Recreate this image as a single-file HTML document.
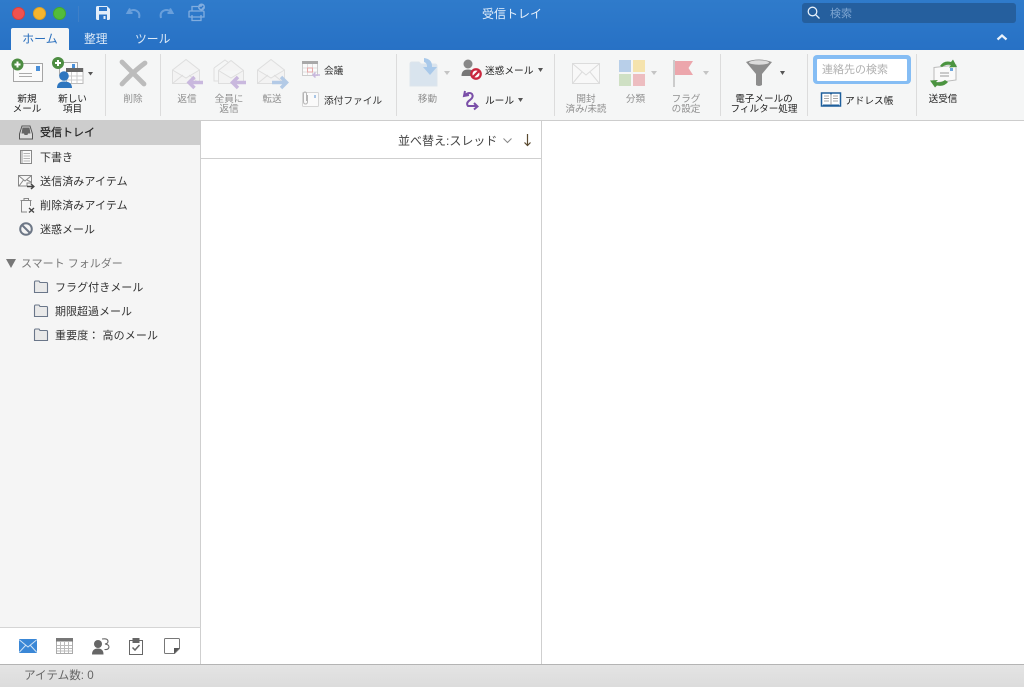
<!DOCTYPE html>
<html lang="ja"><head><meta charset="utf-8"><title>受信トレイ</title>
<style>
*{box-sizing:border-box}
html,body{margin:0;padding:0}
body{width:1024px;height:687px;position:relative;overflow:hidden;background:#fff;font-family:"Liberation Sans","Noto Sans CJK JP",sans-serif;color:#333}
.a{position:absolute}
.t{position:absolute;white-space:nowrap;font-size:9.6px;line-height:10px;text-align:center;color:#222;margin-top:1px}
.g{color:#8f8f8f}
.sep{position:absolute;top:54px;width:1px;height:62px;background:#dcdcdc}
.s{position:absolute;white-space:nowrap;font-size:11px;line-height:14px;color:#333}
.r{font-size:9.7px}
svg{position:absolute;overflow:visible}
</style></head><body>
<div class="a" style="left:0;top:0;width:1024px;height:50px;background:linear-gradient(#2f7bcb,#2771c5)"></div>
<div class="a" style="left:12px;top:7px;width:13px;height:13px;border-radius:50%;background:#f0524f;border:1px solid #d9403d"></div>
<div class="a" style="left:33px;top:7px;width:13px;height:13px;border-radius:50%;background:#f6b52e;border:1px solid #dea224"></div>
<div class="a" style="left:53px;top:7px;width:13px;height:13px;border-radius:50%;background:#53bc3a;border:1px solid #45a82f"></div>
<div class="a" style="left:78px;top:6px;width:1px;height:16px;background:#3f80c8"></div>
<svg style="left:95px;top:5px" width="16" height="16" viewBox="0 0 16 16"><path d="M1 2.500Q1 1 2.500 1H12L15 4V13.500Q15 15 13.500 15H2.500Q1 15 1 13.500Z" fill="#e3eefa"/><rect x="4" y="2" width="8" height="4" fill="#2d76c8"/><rect x="4" y="9.500" width="8" height="5.500" fill="#2d76c8"/><rect x="8.500" y="11" width="2" height="3" fill="#e3eefa"/></svg>
<svg style="left:126px;top:7px" width="16" height="13" viewBox="0 0 16 13" fill="none" stroke="#699fdb" stroke-width="2"><path d="M4 1.500L1.500 6H6.500M2.500 5.500Q6 2 10 3.500Q14.500 5.500 13 11"/></svg>
<svg style="left:158px;top:7px" width="16" height="13" viewBox="0 0 16 13" fill="none" stroke="#699fdb" stroke-width="2"><path d="M12 1.500L14.500 6H9.500M13.500 5.500Q10 2 6 3.500Q1.500 5.500 3 11"/></svg>
<svg style="left:188px;top:3px" width="18" height="19" viewBox="0 0 18 19" fill="none" stroke="#81addf" stroke-width="1.300"><path d="M4 8V3.500H10M1 9Q1 8 2 8H15Q16 8 16 9V14H1ZM4 12V17.500H13V12"/><circle cx="13.500" cy="4" r="3.500" fill="#81addf" stroke="none"/><path d="M11.800 4L13 5.200L15.200 2.800" stroke="#2d76c8"/></svg>
<div class="a" style="left:0;top:0;width:1024px;text-align:center;font-size:12px;line-height:29px;color:#e6f0fb">受信トレイ</div>
<div class="a" style="left:802px;top:3px;width:214px;height:20px;border-radius:3px;background:#255f9e"></div>
<svg style="left:807px;top:6px" width="14" height="14" viewBox="0 0 14 14" fill="none" stroke="#e6f0fb" stroke-width="1.300"><circle cx="5.500" cy="5.500" r="4.300"/><path d="M8.700 8.700L12.500 12.500"/></svg>
<div class="a" style="left:830px;top:7px;font-size:11px;line-height:15px;color:#7ea6d2">検索</div>
<div class="a" style="left:11px;top:28px;width:58px;height:22px;background:#f5f6f6;border-radius:2px 2px 0 0;text-align:center;font-size:12px;line-height:23px;color:#2a6fbd">ホーム</div>
<div class="a" style="left:84px;top:28px;font-size:11.8px;line-height:23px;color:#dce9f7">整理</div>
<div class="a" style="left:135px;top:28px;font-size:11.8px;line-height:23px;color:#dce9f7">ツール</div>
<svg style="left:996px;top:33px" width="12" height="9" viewBox="0 0 12 9" fill="none" stroke="#eaf2fb" stroke-width="2.200"><path d="M1.500 6.500L6 2.500L10.500 6.500"/></svg>

<div class="a" style="left:0;top:50px;width:1024px;height:71px;background:#f5f6f6;border-bottom:1px solid #cdcdcd"></div>
<div class="sep" style="left:105px"></div><div class="sep" style="left:160px"></div><div class="sep" style="left:396px"></div><div class="sep" style="left:554px"></div><div class="sep" style="left:720px"></div><div class="sep" style="left:807px"></div><div class="sep" style="left:916px"></div>

<svg style="left:11px;top:58px" width="34" height="26" viewBox="0 0 34 26"><rect x="2.500" y="5.500" width="29" height="18" fill="#fafafa" stroke="#a5a5a5"/><rect x="25" y="8" width="4" height="5" fill="#4a90d9"/><path d="M8 15.500H21M8 18.500H21" stroke="#aaa"/><circle cx="6.500" cy="6.500" r="6" fill="#4d8d42"/><path d="M3.500 6.500H9.500M6.500 3.500V9.500" stroke="#fff" stroke-width="2"/></svg>
<div class="t" style="left:7px;top:94px;width:40px">新規<br>メール</div>
<svg style="left:53px;top:57px" width="42" height="32" viewBox="0 0 42 32"><rect x="6.500" y="5.500" width="18" height="13" fill="#fafafa" stroke="#aaa"/><rect x="19" y="7" width="3" height="4" fill="#4a90d9"/><circle cx="5" cy="6" r="6" fill="#4d8d42"/><path d="M2 6H8M5 3V9" stroke="#fff" stroke-width="2"/><rect x="13.500" y="11.500" width="16.500" height="15" fill="#fff" stroke="#bbb"/><rect x="13" y="11" width="17" height="4" fill="#666"/><path d="M18.500 15V26M24 15V26M14 19H30M14 23H30" stroke="#ccc"/><circle cx="11" cy="19" r="4.800" fill="#2e76bf"/><path d="M4 31Q4 24.500 11 24.500Q19 24.500 19 31Z" fill="#2e76bf"/><path d="M35 15H40L37.500 18.500Z" fill="#555"/></svg>
<div class="t" style="left:52.500px;top:94px;width:40px">新しい<br>項目</div>
<svg style="left:119px;top:59px" width="28" height="28" viewBox="0 0 28 28" fill="none" stroke="#bcbcbc" stroke-width="4.800" stroke-linecap="round"><path d="M3 3Q13 13 25 25M26 4Q15 12 3 25"/></svg>
<div class="t g" style="left:113px;top:94px;width:40px">削除</div>

<svg style="left:171px;top:57px" width="34" height="34" viewBox="0 0 34 34" fill="none"><path d="M1.500 13L15 2.500L28.500 13V26.500H1.500Z M1.500 13L15 21L28.500 13M1.500 26.500L12 18M28.500 26.500L18 18" stroke="#dedede" fill="#f3f3f3"/><path d="M32 25.500H18.500M23.500 20L18 25.500L23.500 31" stroke="#c9b8de" stroke-width="3.500"/></svg>
<div class="t g" style="left:167px;top:94px;width:40px">返信</div>
<svg style="left:213px;top:57px" width="36" height="34" viewBox="0 0 36 34" fill="none"><path d="M1 11L12 3L16 6M1 11V24H5" stroke="#dedede"/><path d="M5.500 13.500L18 3.500L30.500 13.500V26.500H5.500Z M5.500 13.500L18 21L30.500 13.500" stroke="#dedede" fill="#f3f3f3"/><path d="M33 25.500H20M25 20L19.500 25.500L25 31" stroke="#c9b8de" stroke-width="3.500"/></svg>
<div class="t g" style="left:209px;top:94px;width:40px">全員に<br>返信</div>
<svg style="left:256px;top:57px" width="34" height="34" viewBox="0 0 34 34" fill="none"><path d="M1.500 13L15 2.500L28.500 13V26.500H1.500Z M1.500 13L15 21L28.500 13M1.500 26.500L12 18M28.500 26.500L18 18" stroke="#dedede" fill="#f3f3f3"/><path d="M16 25.500H30M25 20L30.500 25.500L25 31" stroke="#b3cae6" stroke-width="3.500"/></svg>
<div class="t g" style="left:252px;top:94px;width:40px">転送</div>
<svg style="left:301px;top:60px" width="20" height="20" viewBox="0 0 20 20" fill="none"><rect x="1.500" y="1.500" width="15" height="14" fill="#fafafa" stroke="#ccc"/><rect x="1" y="1" width="16" height="3" fill="#a8a8a8"/><path d="M6.500 4V15M11.500 4V15M2 8H16M2 12H16" stroke="#ddd"/><rect x="6.500" y="8" width="5" height="4" stroke="#e7a7a7"/><path d="M19 15H12M14.500 12.500L12 15L14.500 17.500" stroke="#c9b8de" stroke-width="1.500"/></svg>
<div class="s g r" style="left:324px;top:65px">会議</div>
<svg style="left:301px;top:91px" width="19" height="17" viewBox="0 0 19 17" fill="none"><rect x="1.500" y="1.500" width="16" height="14" rx="1" fill="#fafafa" stroke="#d5d5d5"/><rect x="13" y="4" width="2" height="3" fill="#a9c6e6"/><path d="M6.500 4V10.500Q6.500 13 4.500 13Q2.500 13 2.500 10.500V3Q2.500 1 4 1Q5.500 1 5.500 3V10" stroke="#b5b5b5"/></svg>
<div class="s g r" style="left:324px;top:95px">添付ファイル</div>

<svg style="left:409px;top:57px" width="30" height="31" viewBox="0 0 30 31"><path d="M1 7Q1 5 3 5H10L12 7H26Q28 7 28 9V29H1Z" fill="#d9e4ee" stroke="#dde5ec"/><path d="M15 1Q23 2 23 9V10H28L21 18L14 10H18V9Q18 6 15 5Z" fill="#a9c9ea"/></svg>
<svg style="left:444px;top:71px" width="6" height="4"><path d="M0 0H6L3 4Z" fill="#c4c4c4"/></svg>
<div class="t g" style="left:407.500px;top:94px;width:40px">移動</div>
<svg style="left:461px;top:59px" width="22" height="21" viewBox="0 0 22 21"><circle cx="7" cy="5" r="4.500" fill="#888"/><path d="M0.500 17Q0.500 10.500 7 10.500Q14 10.500 14 17Z" fill="#777"/><circle cx="15" cy="15" r="4.700" fill="#fff" stroke="#c9283e" stroke-width="2.300"/><path d="M11.800 18.200L18.200 11.800" stroke="#c9283e" stroke-width="2.300"/></svg>
<div class="s r" style="left:485px;top:65px;color:#222">迷惑メール</div>
<svg style="left:538px;top:68px" width="5" height="4"><path d="M0 0H5L2.500 4Z" fill="#555"/></svg>
<svg style="left:463px;top:90px" width="17" height="21" viewBox="0 0 17 21" fill="none" stroke="#7a4fa8" stroke-width="2"><path d="M2 1L1 6L6 5M1.500 5.500Q6 1.500 9 4Q11 7 7 10Q2.500 13 5 16H13M11 13L14.500 16.500L11 19.500"/></svg>
<div class="s r" style="left:485px;top:95px;color:#222">ルール</div>
<svg style="left:518px;top:98px" width="5" height="4"><path d="M0 0H5L2.500 4Z" fill="#555"/></svg>

<svg style="left:572px;top:63px" width="28" height="21" viewBox="0 0 28 21" fill="none" stroke="#dcdcdc"><rect x="0.500" y="0.500" width="27" height="20" fill="#f8f8f8"/><path d="M1 1L14 12L27 1M1 20L10 9M27 20L18 9"/></svg>
<div class="t g" style="left:565px;top:94px;width:42px">開封<br>済み/未読</div>
<div class="a" style="left:619px;top:60px;width:12px;height:12px;background:#b8cfe9"></div>
<div class="a" style="left:633px;top:60px;width:12px;height:12px;background:#f5e3ad"></div>
<div class="a" style="left:619px;top:74px;width:12px;height:12px;background:#cfe0c4"></div>
<div class="a" style="left:633px;top:74px;width:12px;height:12px;background:#edbdc0"></div>
<svg style="left:651px;top:71px" width="6" height="4"><path d="M0 0H6L3 4Z" fill="#c4c4c4"/></svg>
<div class="t g" style="left:615.500px;top:94px;width:40px">分類</div>
<svg style="left:672px;top:60px" width="22" height="27" viewBox="0 0 22 27"><path d="M1 0H3V27H1Z" fill="#ccc"/><path d="M3 1H21L16.500 8L21 15H3Z" fill="#eca6ac"/></svg>
<svg style="left:703px;top:71px" width="6" height="4"><path d="M0 0H6L3 4Z" fill="#c4c4c4"/></svg>
<div class="t g" style="left:666px;top:94px;width:40px">フラグ<br>の設定</div>

<svg style="left:745px;top:59px" width="28" height="28" viewBox="0 0 28 28"><path d="M1 3Q14 -2 27 3L17 15V26Q14 28 11 26V15Z" fill="#8d8d8d"/><ellipse cx="14" cy="3.500" rx="10" ry="2.200" fill="#dcdcdc"/></svg>
<svg style="left:780px;top:71px" width="5" height="4"><path d="M0 0H5L2.500 4Z" fill="#555"/></svg>
<div class="t" style="left:729px;top:94px;width:70px">電子メールの<br>フィルター処理</div>

<div class="a" style="left:813px;top:55px;width:98px;height:29px;background:#85bdf4;border-radius:4px"></div>
<div class="a" style="left:817px;top:59px;width:90px;height:22px;background:#fff;border-radius:1px;font-size:11px;line-height:23px;padding-left:5px;color:#b0b0b0">連絡先の検索</div>
<svg style="left:821px;top:91px" width="20" height="16" viewBox="0 0 20 16" fill="none"><path d="M0.500 2H9.500L10 3L10.500 2H19.500V15H0.500Z" fill="#fff" stroke="#1f5f9c" stroke-width="1.500"/><path d="M2 13.500H18V15.500H2Z" fill="#1f5f9c"/><path d="M10 3V14M3 5H8M3 7.500H8M3 10H8M12 5H17M12 7.500H17M12 10H17" stroke="#888" stroke-width=".8"/></svg>
<div class="s r" style="left:845px;top:95px;color:#222">アドレス帳</div>
<svg style="left:929px;top:59px" width="30" height="29" viewBox="0 0 30 29"><path d="M5 8.500L27 6V21L5 24Z" fill="#fafafa" stroke="#bbb"/><rect x="21" y="9" width="3" height="3" fill="#6ca5dc"/><path d="M11 14H20M11 17H20" stroke="#999"/><path d="M11 7Q15 1 22 3L24 0.500L28 8L20 8.500L22 6Q17 5 13 8Z" fill="#4b9440"/><path d="M19 23Q15 28 8 26.500L6 28.500L1 21.500L9 21L7 23Q12 24 16 21Z" fill="#4b9440"/></svg>
<div class="t" style="left:923px;top:94px;width:40px">送受信</div>

<div class="a" style="left:0;top:121px;width:201px;height:543px;background:#f5f5f5;border-right:1px solid #cfcfcf"></div>
<div class="a" style="left:0;top:120px;width:201px;height:25px;background:#cdcdcd"></div>
<svg style="left:19px;top:125px" width="14" height="15" viewBox="0 0 14 15" fill="none" stroke="#555"><path d="M3 1H11L13.500 9V14H0.500V9Z" fill="#ddd"/><path d="M3.500 2.500H10.500L11.500 8.500H9L8.500 10H5.500L5 8.500H2.500Z" fill="#666" stroke="none"/></svg>
<div class="s" style="left:40px;top:126px;color:#222;-webkit-text-stroke:.2px #222">受信トレイ</div>
<svg style="left:20px;top:150px" width="12" height="14" viewBox="0 0 12 14" fill="none" stroke="#888"><rect x="0.500" y="0.500" width="11" height="13" fill="#fafafa"/><path d="M3.500 3.500H10M3.500 6H10M3.500 8.500H10M3.500 11H10" stroke="#b5b5b5"/><path d="M2 1V13" stroke="#999"/></svg>
<div class="s" style="left:40px;top:151px">下書き</div>
<svg style="left:18px;top:175px" width="17" height="15" viewBox="0 0 17 15" fill="none" stroke="#888"><path d="M0.500 0.500H13.500V8H9V11H0.500Z M1 1L7 6L13 1M1 11L5.500 5M13 7L9 5" fill="#fafafa"/><path d="M9 11.500H15.500M13 9L15.800 11.500L13 14" stroke="#444" stroke-width="1.500"/></svg>
<div class="s" style="left:40px;top:175px;letter-spacing:.1px">送信済みアイテム</div>
<svg style="left:20px;top:198px" width="15" height="15" viewBox="0 0 15 15" fill="none" stroke="#888"><path d="M1.500 3V14H7M0.500 2.500H11.500M4 2.500V0.500H8.500V2.500M10.500 3V8"/><path d="M9 10L14 14.500M14 10L9 14.500" stroke="#444" stroke-width="1.300"/></svg>
<div class="s" style="left:40px;top:199px;letter-spacing:.1px">削除済みアイテム</div>
<svg style="left:19px;top:222px" width="14" height="14" viewBox="0 0 14 14" fill="none" stroke="#6d7786" stroke-width="2"><circle cx="7" cy="7" r="5.800"/><path d="M3 3L11 11"/></svg>
<div class="s" style="left:40px;top:223px">迷惑メール</div>
<svg style="left:6px;top:259px" width="10" height="9"><path d="M0 0H10L5 9Z" fill="#777"/></svg>
<div class="s" style="left:21px;top:257px;color:#777">スマート フォルダー</div>
<svg style="left:34px;top:280px" width="14" height="13" viewBox="0 0 14 13" fill="#e9e9e9" stroke="#6a7689" stroke-width="1.100"><path d="M.5 2.500Q.5 1 1.500 1H5L6 2.500H12.500Q13.500 2.500 13.500 3.500V12.500H.5Z"/></svg>
<svg style="left:34px;top:304px" width="14" height="13" viewBox="0 0 14 13" fill="#e9e9e9" stroke="#6a7689" stroke-width="1.100"><path d="M.5 2.500Q.5 1 1.500 1H5L6 2.500H12.500Q13.500 2.500 13.500 3.500V12.500H.5Z"/></svg>
<svg style="left:34px;top:328px" width="14" height="13" viewBox="0 0 14 13" fill="#e9e9e9" stroke="#6a7689" stroke-width="1.100"><path d="M.5 2.500Q.5 1 1.500 1H5L6 2.500H12.500Q13.500 2.500 13.500 3.500V12.500H.5Z"/></svg>
<div class="s" style="left:55px;top:281px;letter-spacing:.05px">フラグ付きメール</div>
<div class="s" style="left:55px;top:305px">期限超過メール</div>
<div class="s" style="left:55px;top:329px;letter-spacing:.1px">重要度： 高のメール</div>

<div class="a" style="left:0;top:627px;width:201px;height:37px;background:#fff;border-top:1px solid #d5d5d5;border-right:1px solid #cfcfcf"></div>
<svg style="left:19px;top:639px" width="18" height="14" viewBox="0 0 18 14"><rect width="18" height="14" rx="1" fill="#3a87d6"/><path d="M0.500 1L9 8L17.500 1M0.500 13L6.500 6.500M17.500 13L11.500 6.500" stroke="#cfe3f6" fill="none"/></svg>
<svg style="left:56px;top:638px" width="17" height="16" viewBox="0 0 17 16" fill="none" stroke="#aaa"><rect x="0.500" y="0.500" width="16" height="15" fill="#fff"/><rect x="0" y="0" width="17" height="3.500" fill="#777" stroke="none"/><path d="M4.500 4V15M8.500 4V15M12.500 4V15M1 7.500H16M1 10.500H16M1 13H16" stroke="#bbb"/></svg>
<svg style="left:92px;top:638px" width="18" height="17" viewBox="0 0 18 17"><circle cx="6" cy="6" r="4" fill="#666"/><path d="M0 16.500Q0 10.500 6 10.500Q11.500 10.500 11.500 16.500Z" fill="#666"/><path d="M10 1Q16 0 16 3.500Q16 5.500 13 6Q17 6.500 17 9Q16.500 12 12.500 11.500" fill="none" stroke="#666" stroke-width="1.100"/></svg>
<svg style="left:129px;top:638px" width="14" height="17" viewBox="0 0 14 17" fill="none" stroke="#666"><rect x="0.500" y="2.500" width="13" height="14"/><rect x="4" y="0.500" width="6" height="4" fill="#666"/><path d="M3.500 9.500L6 12L10.500 7" stroke-width="1.500"/></svg>
<svg style="left:164px;top:638px" width="16" height="16" viewBox="0 0 16 16" fill="none" stroke="#777"><path d="M1.500 .5H14.500Q15.500 .5 15.500 1.500V10.500L10.500 15.500H1.500Q.5 15.500 .5 14.500V1.500Q.5 .5 1.500 .5Z"/><path d="M10 15.500V10H15.500Z" fill="#555" stroke="none"/></svg>

<div class="a" style="left:201px;top:121px;width:341px;height:543px;background:#fff;border-right:1px solid #cfcfcf"></div>
<div class="a" style="left:201px;top:158px;width:340px;height:1px;background:#cfcfcf"></div>
<div class="s" style="left:398px;top:134px;font-size:12px;line-height:15px;color:#444">並べ替え:スレッド</div>
<svg style="left:503px;top:138px" width="9" height="6" fill="none" stroke="#888"><path d="M.5 .5L4.500 4.500L8.500 .5"/></svg>
<svg style="left:524px;top:134px" width="7" height="13" fill="none" stroke="#5a4a30" stroke-width="1.200"><path d="M3.500 0V11.500M.5 8.500L3.500 11.500L6.500 8.500"/></svg>

<div class="a" style="left:0;top:664px;width:1024px;height:23px;background:linear-gradient(#e4e4e4,#dcdcdc);border-top:1px solid #b4b4b4"></div>
<div class="s" style="left:24px;top:669px;font-size:11.600px;color:#666">アイテム数: 0</div>
</body></html>
